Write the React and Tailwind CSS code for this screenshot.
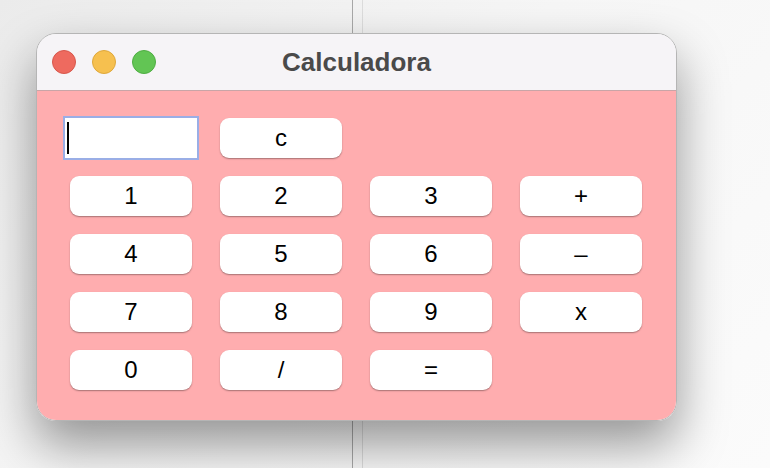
import React from "react";

const rows = [
  ["1", "2", "3", "+"],
  ["4", "5", "6", "–"],
  ["7", "8", "9", "x"],
  ["0", "/", "=", null],
];

function Btn({ label }) {
  return (
    <div className="w-[122px] h-[40px] rounded-[9px] bg-white flex items-center justify-center text-[24px] text-black shadow-[0_1px_1.5px_rgba(0,0,0,0.35)] leading-none">
      {label}
    </div>
  );
}

export default function App() {
  return (
    <div
      className="relative w-[770px] h-[468px] overflow-hidden bg-[linear-gradient(135deg,#ebebeb_0%,#f6f6f6_45%,#fbfbfb_100%)]"
      style={{ fontFamily: '"Liberation Sans", Arial, sans-serif' }}
    >
      <div className="absolute left-[352px] top-0 h-full w-px bg-[#a8a8a8]" />
      <div className="absolute left-[362px] top-0 h-full w-px bg-[#dcdcdc]" />
      <div className="relative ml-[36px] mt-[33px] w-[641px] h-[388px] rounded-[20px] overflow-hidden border border-[#b5b5b5] shadow-[0_24px_50px_rgba(0,0,0,0.4)] flex flex-col">
        <div className="h-[57px] bg-[#f6f4f7] border-b border-[#c9a5a7] flex items-center relative shrink-0">
          <div className="flex gap-[16px] ml-[15px]">
            <div className="w-[24px] h-[24px] rounded-full bg-[#ee6a5f] border border-[#d7574c]" />
            <div className="w-[24px] h-[24px] rounded-full bg-[#f6c04f] border border-[#dea73b]" />
            <div className="w-[24px] h-[24px] rounded-full bg-[#62c554] border border-[#4fad43]" />
          </div>
          <div className="absolute inset-0 flex items-center justify-center">
            <span className="text-[26px] font-bold text-[#4a4a4a]">Calculadora</span>
          </div>
        </div>
        <div className="flex-1 bg-[#ffadaf] pl-[26px] pt-[25px]">
          <div className="flex items-center gap-[21px]">
            <div className="w-[136px] h-[44px] bg-white border-2 border-[#9aaee6] flex items-center pl-[2px]">
              <div className="w-[2px] h-[32px] bg-black" />
            </div>
            <Btn label="c" />
          </div>
          <div className="flex flex-col gap-[18px] mt-[16px] ml-[7px]">
            {rows.map((r, i) => (
              <div key={i} className="flex gap-[28px]">
                {r.map((l, j) => (l ? <Btn key={j} label={l} /> : null))}
              </div>
            ))}
          </div>
        </div>
      </div>
    </div>
  );
}
